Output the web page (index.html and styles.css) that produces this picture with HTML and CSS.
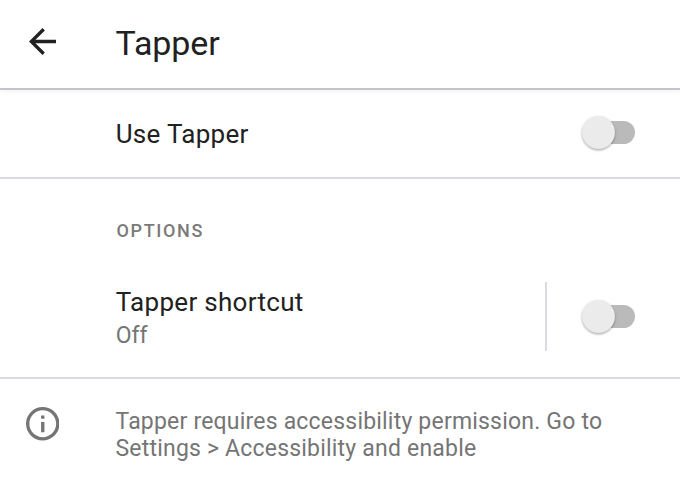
FILE: index.html
```html
<!DOCTYPE html>
<html lang="en">
<head>
<meta charset="utf-8">
<title>Tapper</title>
<link rel="stylesheet" href="styles.css">
</head>
<body>
<header class="bar">
  <svg class="back" viewBox="4 4 16 16"><path d="M20 11H7.83l5.59-5.59L12 4l-8 8 8 8 1.41-1.41L7.83 13H20z"/></svg>
  <h1 class="title">Tapper</h1>
</header>
<main>
  <section class="row main-row">
    <span class="label">Use Tapper</span>
    <span class="switch"></span>
  </section>
  <section class="options">
    <h2 class="heading">OPTIONS</h2>
    <div class="row shortcut">
      <div class="text">
        <div class="label">Tapper shortcut</div>
        <div class="state">Off</div>
      </div>
      <div class="divider"></div>
      <span class="switch"></span>
    </div>
  </section>
  <footer class="info">
    <svg class="info-icon" viewBox="2 2 20 20"><path d="M11 7h2v2h-2zm0 4h2v6h-2zm1-9C6.48 2 2 6.48 2 12s4.48 10 10 10 10-4.48 10-10S17.52 2 12 2zm0 18c-4.41 0-8-3.59-8-8s3.59-8 8-8 8 3.59 8 8-3.59 8-8 8z"/></svg>
    <p class="note">Tapper requires accessibility permission. Go to<br>Settings &gt; Accessibility and enable</p>
  </footer>
</main>
</body>
</html>
```
FILE: styles.css
```css
* { box-sizing: border-box; }
body { margin: 0; background: #fff; color: #212121; font-family: Roboto, sans-serif; height: 480px; overflow: hidden; }
h1, h2, p { margin: 0; font-weight: 400; }
.bar { height: 90px; display: flex; align-items: flex-start; padding-left: 29px; border-bottom: 2px solid #c5c4ca; box-shadow: 0 1px 5px rgba(60,50,90,.08); }
.back { width: 27px; height: 27px; margin-top: 28px; fill: #212121; }
.title { margin: 23px 0 0 59.6px; font-size: 34px; line-height: 40px; letter-spacing: -.1px; }
.row { display: flex; padding-left: 115.7px; padding-right: 45px; }
.main-row { height: 89px; align-items: center; justify-content: space-between; border-bottom: 2px solid #dbdae0; }
.main-row .switch { top: -1px; }
.label { font-size: 26px; line-height: 32px; letter-spacing: .3px; }
.switch { position: relative; width: 54px; height: 34px; flex: none; }
.switch::before { content: ""; position: absolute; left: 10px; top: 5px; width: 43.5px; height: 23.5px; border-radius: 12px; background: #bababa; }
.switch::after { content: ""; position: absolute; left: .6px; top: 0; width: 33.6px; height: 33.6px; border-radius: 50%; background: #ebebeb; box-shadow: 0 1.2px 2.5px rgba(0,0,0,.35); }
.options { height: 200px; border-bottom: 2px solid #dbdae0; }
.heading { padding: 41px 0 0 116.5px; font-size: 18px; line-height: 22px; font-weight: 500; letter-spacing: 1.65px; color: #7a7a7a; }
.shortcut { margin-top: 40px; height: 69px; align-items: center; }
.text { flex: 1; padding-top: 6px; }
.state { font-size: 23px; line-height: 36px; color: #757575; }
.divider { width: 2px; height: 69px; margin-right: 34px; background: #dbdae0; }
.info { display: flex; padding: 28px 0 0 25.8px; color: #757575; }
.info-icon { width: 33.5px; height: 33.5px; fill: #757575; }
.note { margin: 1px 0 0 56.2px; font-size: 23px; line-height: 27px; letter-spacing: .2px; white-space: nowrap; }
```
